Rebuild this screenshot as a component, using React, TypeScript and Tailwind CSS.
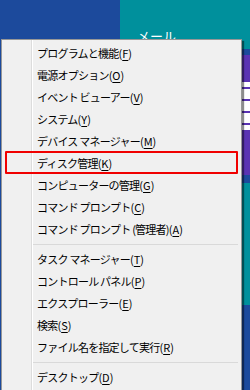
const items: (string | null)[] = [
  "プログラムと機能|F",
  "電源オプション|O",
  "イベント ビューアー|V",
  "システム|Y",
  "デバイス マネージャー|M",
  "ディスク管理|K",
  "コンピューターの管理|G",
  "コマンド プロンプト|C",
  "コマンド プロンプト (管理者)|A",
  null,
  "タスク マネージャー|T",
  "コントロール パネル|P",
  "エクスプローラー|E",
  "検索|S",
  "ファイル名を指定して実行|R",
  null,
  "デスクトップ|D",
];

function MenuRow({ label, keyChar }: { label: string; keyChar: string }) {
  const selected = keyChar === "K";
  return (
    <div className="relative flex h-[22px] items-center pl-[35px]">
      {selected ? (
        <div className="absolute top-[-1px] right-[3px] bottom-0 left-[3px] rounded-[1px] border-2 border-[#f00000]" />
      ) : null}
      <span className="whitespace-nowrap">
        <span className="tracking-[-0.07em]">{label}</span>
        (<span className="underline underline-offset-2">{keyChar}</span>)
      </span>
    </div>
  );
}

export default function App() {
  return (
    <div className="relative h-[390px] w-[250px] overflow-hidden bg-[#1c4a9c]">
      <div className="flex h-full">
        <div className="w-[120px]" />
        <div className="flex flex-1 flex-col">
          <div
            className="flex h-[49px] items-end bg-[#00909c] pb-[5px] pl-[17px] text-[13px] leading-[16px] text-white"
            style={{ fontFamily: '"Noto Sans CJK JP", sans-serif' }}
          >
            メール
          </div>
          <div className="mt-[6px] flex h-[120px] flex-col bg-[#5a33b3]">
            <div className="h-[27px]" />
            <div className="flex h-[48px] flex-col justify-around bg-white">
              <div className="h-[2px] bg-[#5a33b3]" />
              <div className="h-[2px] bg-[#5a33b3]" />
              <div className="h-[2px] bg-[#5a33b3]" />
              <div className="h-[2px] bg-[#5a33b3]" />
            </div>
          </div>
          <div className="mt-[8px] h-[122px] bg-[#00909c]" />
        </div>
      </div>

      <div
        className="absolute top-[39px] left-[1px] w-[241px] border border-[#979797] bg-[#f0f0f0] py-[2px] text-[11px] text-black shadow-[2px_2px_1px_rgba(0,0,0,0.45)]"
        style={{ fontFamily: '"Noto Sans CJK JP", sans-serif' }}
      >
        <div className="absolute top-0 bottom-0 left-[29px] w-px bg-[#dcdcdc]" />
        <div className="absolute top-0 bottom-0 left-[30px] w-px bg-white" />
        {items.map((item, i) =>
          item === null ? (
            <div key={i} className="flex h-[8px] items-center pl-[31px] pr-[3px]">
              <div className="h-px w-full bg-[#d9d9d9]" />
            </div>
          ) : (
            <MenuRow key={i} label={item.split("|")[0]} keyChar={item.split("|")[1]} />
          ),
        )}
      </div>
    </div>
  );
}
